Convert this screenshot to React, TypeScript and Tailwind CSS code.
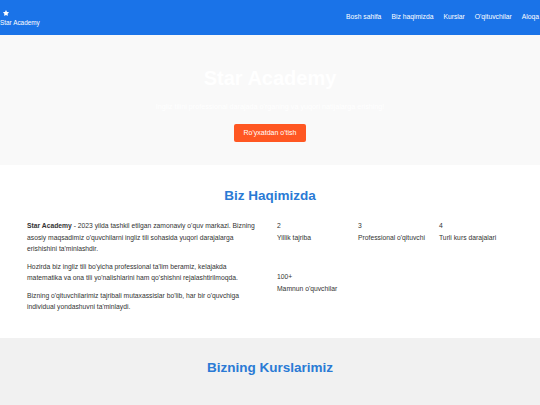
import { FaStar } from "react-icons/fa";

const NAV_LINKS = ["Bosh sahifa", "Biz haqimizda", "Kurslar", "O'qituvchilar", "Aloqa"];

const STATS = [
  { value: "2", label: "Yillik tajriba" },
  { value: "3", label: "Professional o'qituvchi" },
  { value: "4", label: "Turli kurs darajalari" },
  { value: "100+", label: "Mamnun o'quvchilar" },
];

export default function App() {
  return (
    <div className="w-[540px] h-[405px] overflow-hidden bg-white font-['Liberation_Sans',Arial,sans-serif] text-[#333]">
      {/* Navbar */}
      <nav className="flex h-[35px] items-center bg-[#1a73e8] text-white">
        <div className="flex w-[60px] shrink-0 flex-col items-start pt-[1px]">
          <FaStar className="ml-[3px] h-[6px] w-[6px]" />
          <span className="mt-[2px] whitespace-nowrap text-[6.4px] leading-[9px]">Star Academy</span>
        </div>
        <ul className="ml-auto mr-[1px] flex shrink-0 gap-[10px] whitespace-nowrap text-[6.75px]">
          {NAV_LINKS.map((l) => (
            <li key={l}>{l}</li>
          ))}
        </ul>
      </nav>

      {/* Hero */}
      <section className="flex h-[130px] flex-col items-center bg-[#f9f9f9] pt-[31px] text-white">
        <h1 className="text-[20px] font-bold leading-[24px]">Star Academy</h1>
        <p className="mt-[12px] text-[7.2px] leading-[10px]">
          Ingliz tilini professional darajada o'rganing va yuqori natijalarga erishing!
        </p>
        <button className="mt-[12px] h-[18px] rounded-[2px] bg-[#ff5722] px-[10px] text-[7px] text-white">
          Ro'yxatdan o'tish
        </button>
      </section>

      {/* About */}
      <section className="h-[173px] bg-white pt-[23px]">
        <h2 className="text-center text-[13.5px] font-bold leading-[16px] text-[#2a7ad5]">Biz Haqimizda</h2>
        <div className="mt-[16px] flex gap-[17px] pl-[27px]">
          <div className="flex w-[233px] shrink-0 flex-col gap-[6px] text-[6.75px] leading-[11.5px]">
            <p>
              <strong>Star Academy</strong> - 2023 yilda tashkil etilgan zamonaviy o'quv markazi. Bizning asosiy
              maqsadimiz o'quvchilarni ingliz tili sohasida yuqori darajalarga erishishini ta'minlashdir.
            </p>
            <p>
              Hozirda biz ingliz tili bo'yicha professional ta'lim beramiz, kelajakda matematika va ona tili
              yo'nalishlarini ham qo'shishni rejalashtirilmoqda.
            </p>
            <p>
              Bizning o'qituvchilarimiz tajribali mutaxassislar bo'lib, har bir o'quvchiga individual yondashuvni
              ta'minlaydi.
            </p>
          </div>
          <div className="grid h-fit w-[243px] grid-cols-3 gap-y-[28px] text-[6.75px] leading-[11.5px]">
            {STATS.map((s) => (
              <div key={s.label}>
                <div>{s.value}</div>
                <div className="whitespace-nowrap">{s.label}</div>
              </div>
            ))}
          </div>
        </div>
      </section>

      {/* Courses */}
      <section className="h-[67px] bg-[#f1f1f1] pt-[22px]">
        <h2 className="text-center text-[13.5px] font-bold leading-[16px] text-[#2a7ad5]">Bizning Kurslarimiz</h2>
      </section>
    </div>
  );
}
